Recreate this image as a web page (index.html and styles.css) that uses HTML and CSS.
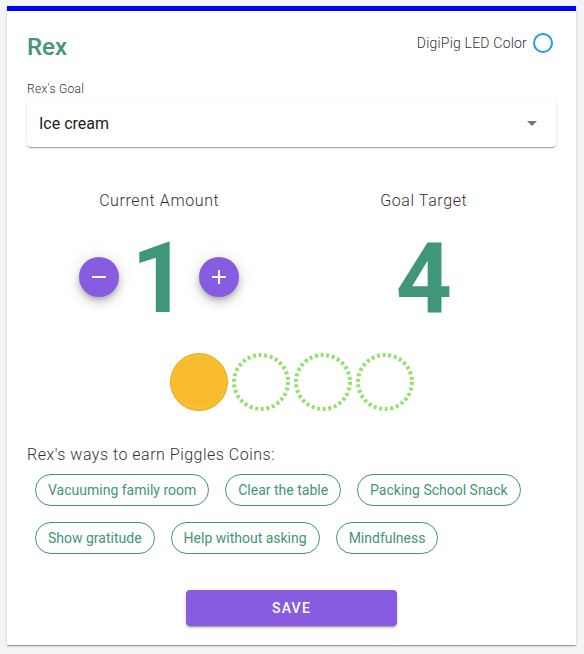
FILE: index.html
```html
<!DOCTYPE html>
<html>
<head>
<meta charset="utf-8">
<link rel="stylesheet" href="styles.css">
</head>
<body>
<div class="card">
  <div class="header">
    <div class="title">Rex</div>
    <div class="led">
      <span class="led-label">DigiPig LED Color</span>
      <span class="led-circle"></span>
    </div>
  </div>

  <div class="field-label">Rex's Goal</div>
  <div class="select">
    <span class="select-value">Ice cream</span>
    <svg class="select-arrow" width="10" height="5" viewBox="0 0 10 5"><path d="M0 0l5 5 5-5z" fill="#757575"/></svg>
  </div>

  <div class="amounts">
    <div class="amount-col">
      <div class="amount-label">Current Amount</div>
      <div class="amount-row">
        <button class="fab" aria-label="decrease">
          <svg width="24" height="24" viewBox="0 0 24 24"><path d="M19 13H5v-2h14v2z" fill="#fff"/></svg>
        </button>
        <span class="big-num">1</span>
        <button class="fab" aria-label="increase">
          <svg width="24" height="24" viewBox="0 0 24 24"><path d="M19 13h-6v6h-2v-6H5v-2h6V5h2v6h6v2z" fill="#fff"/></svg>
        </button>
      </div>
    </div>
    <div class="amount-col">
      <div class="amount-label">Goal Target</div>
      <div class="amount-row">
        <span class="big-num">4</span>
      </div>
    </div>
  </div>

  <div class="coins">
    <svg class="coin" width="60" height="60" viewBox="0 0 60 60">
      <circle cx="30" cy="30.5" r="28.5" fill="#e9a422" opacity="0.35"/>
      <circle cx="30" cy="30" r="28.5" fill="#f8bb2e" stroke="#eda926" stroke-width="1"/>
      <circle cx="30" cy="30" r="26" fill="none" stroke="#fbc94a" stroke-width="1" opacity="0.7"/>
    </svg>
    <svg class="coin" width="60" height="60" viewBox="0 0 60 60">
      <circle cx="30" cy="30" r="27" fill="none" stroke="#93e06e" stroke-width="4" stroke-dasharray="3 2.65"/>
    </svg>
    <svg class="coin" width="60" height="60" viewBox="0 0 60 60">
      <circle cx="30" cy="30" r="27" fill="none" stroke="#93e06e" stroke-width="4" stroke-dasharray="3 2.65"/>
    </svg>
    <svg class="coin" width="60" height="60" viewBox="0 0 60 60">
      <circle cx="30" cy="30" r="27" fill="none" stroke="#93e06e" stroke-width="4" stroke-dasharray="3 2.65"/>
    </svg>
  </div>

  <div class="ways-label">Rex's ways to earn Piggles Coins:</div>
  <div class="chips">
    <span class="chip">Vacuuming family room</span>
    <span class="chip">Clear the table</span>
    <span class="chip">Packing School Snack</span>
    <span class="chip">Show gratitude</span>
    <span class="chip">Help without asking</span>
    <span class="chip">Mindfulness</span>
  </div>

  <div class="actions">
    <button class="save">SAVE</button>
  </div>
</div>
</body>
</html>
```

FILE: styles.css
```css
* { box-sizing: border-box; }

html, body {
  margin: 0;
  background: #f3f4f6;
}

body {
  padding: 6px 8px 8px 7px;
  font-family: Roboto, "Liberation Sans", sans-serif;
  color: #333;
}

.card {
  background: #fff;
  border-top: 5px solid #0000ff;
  padding: 18px 20px 19px 20px;
  box-shadow: 0 2px 1px -1px rgba(0,0,0,.2), 0 1px 1px 0 rgba(0,0,0,.14), 0 1px 3px 0 rgba(0,0,0,.12);
}

.header {
  display: flex;
  justify-content: space-between;
  align-items: flex-start;
}

.title {
  font-size: 24px;
  line-height: 36px;
  font-weight: 500;
  color: #3f9678;
}

.led {
  display: flex;
  align-items: center;
  gap: 6px;
  margin-top: 4px;
  margin-right: 3px;
}

.led-label {
  font-size: 14px;
  line-height: 20px;
  font-weight: 300;
  letter-spacing: 0.2px;
  color: #333;
}

.led-circle {
  width: 20px;
  height: 20px;
  border-radius: 50%;
  border: 2px solid #2196f3;
}

.field-label {
  margin-top: 16px;
  font-size: 12px;
  line-height: 16px;
  font-weight: 300;
  color: #333;
  letter-spacing: 0.3px;
}

.select {
  margin-top: 2px;
  height: 48px;
  display: flex;
  align-items: center;
  justify-content: space-between;
  padding: 0 19px 0 12px;
  border-radius: 4px;
  background: #fff;
  box-shadow: 0 2px 1px -1px rgba(0,0,0,.2), 0 1px 1px 0 rgba(0,0,0,.14), 0 1px 3px 0 rgba(0,0,0,.12);
}

.select-value {
  font-size: 16px;
  color: #222;
}

.amounts {
  margin-top: 42px;
  display: grid;
  grid-template-columns: 1fr 1fr;
}

.amount-col {
  display: flex;
  flex-direction: column;
  align-items: center;
}

.amount-label {
  font-size: 16px;
  line-height: 24px;
  font-weight: 300;
  letter-spacing: 0.6px;
  color: #333;
}

.amount-row {
  margin-top: 17px;
  display: flex;
  align-items: center;
  gap: 12px;
}

.big-num {
  font-size: 98px;
  line-height: 98px;
  font-weight: 700;
  color: #3f9678;
}

.fab {
  width: 40px;
  height: 40px;
  border-radius: 50%;
  border: none;
  padding: 0;
  background: #885ce0;
  display: flex;
  align-items: center;
  justify-content: center;
  margin-bottom: 4px;
  box-shadow: 0 3px 5px -1px rgba(0,0,0,.2), 0 6px 10px 0 rgba(0,0,0,.14), 0 1px 18px 0 rgba(0,0,0,.12);
}

.coins {
  margin-top: 24px;
  display: flex;
  justify-content: center;
  gap: 2px;
}

.coin { display: block; }

.ways-label {
  margin-top: 31px;
  font-size: 16px;
  line-height: 24px;
  font-weight: 300;
  letter-spacing: 0.5px;
  color: #333;
}

.chips {
  margin-top: 7px;
  padding-left: 8px;
  display: flex;
  flex-wrap: wrap;
  column-gap: 16px;
  row-gap: 16px;
}

.chip {
  height: 32px;
  display: inline-flex;
  align-items: center;
  padding: 0 12px;
  border: 1px solid #3f9678;
  border-radius: 16px;
  font-size: 14px;
  color: #3f9678;
}

.actions {
  margin-top: 36px;
  display: flex;
  justify-content: center;
}

.save {
  width: 211px;
  height: 36px;
  border: none;
  border-radius: 4px;
  background: #885ce0;
  color: #fff;
  font-family: Roboto, "Liberation Sans", sans-serif;
  font-size: 14px;
  font-weight: 500;
  letter-spacing: 1.25px;
  box-shadow: 0 3px 1px -2px rgba(0,0,0,.2), 0 2px 2px 0 rgba(0,0,0,.14), 0 1px 5px 0 rgba(0,0,0,.12);
}
```
